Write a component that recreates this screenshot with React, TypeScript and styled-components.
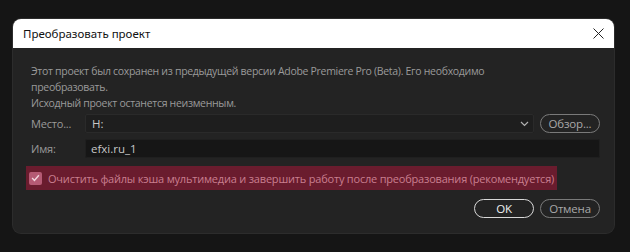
import { FC } from "react";
import styled, { createGlobalStyle } from "styled-components";

const GlobalStyle = createGlobalStyle`
  html, body {
    margin: 0;
    padding: 0;
    background: #151515;
  }
  body {
    width: 630px;
    height: 252px;
    overflow: hidden;
  }
`;

const Page = styled.div`
  width: 630px;
  height: 252px;
  padding: 19px 16px 0 13px;
  box-sizing: border-box;
`;

const Dialog = styled.div`
  width: 601px;
  height: 214px;
  border-radius: 8px;
  overflow: hidden;
  background: #232323;
  box-shadow: 0 0 0 1px #2c2c2c;
  display: flex;
  flex-direction: column;
`;

const TitleBar = styled.div`
  height: 29px;
  background: #ffffff;
  display: flex;
  align-items: center;
  justify-content: space-between;
  padding: 0 9px 0 10px;
`;

const Title = styled.span`
  font-family: "Noto Sans", sans-serif;
  font-size: 11.5px;
  color: #111;
`;

const CloseButton = styled.div`
  width: 14px;
  height: 14px;
  display: flex;
  align-items: center;
  justify-content: center;
`;

const Body = styled.div`
  flex: 1;
  padding: 15px 14px 0 18px;
  font-family: "Open Sans", sans-serif;
  font-size: 10.5px;
  letter-spacing: -0.3px;
  color: #9a9a9a;
  display: flex;
  flex-direction: column;
`;

const Message = styled.p`
  margin: 0;
  line-height: 16px;
`;

const FieldRow = styled.div<{ $top: number }>`
  display: flex;
  align-items: center;
  margin-top: ${(p) => p.$top}px;
  gap: 6px;
`;

const Label = styled.span`
  width: 48px;
  white-space: nowrap;
  font-size: 11px;
  letter-spacing: -0.2px;
`;

const Select = styled.div`
  flex: 1;
  height: 19px;
  box-sizing: border-box;
  background: #1e1e1e;
  border: 1px solid #2a2a2a;
  border-radius: 2px;
  display: flex;
  align-items: center;
  justify-content: space-between;
  padding: 0 4px 0 6px;
  color: #c8c8c8;
  font-size: 11.5px;
  letter-spacing: 0;
`;

const Input = styled.div`
  flex: 1;
  height: 19px;
  box-sizing: border-box;
  background: #161616;
  border: 1px solid #1f1f1f;
  border-radius: 2px;
  display: flex;
  align-items: center;
  padding: 0 5px;
  color: #c8c8c8;
  font-size: 11.5px;
  letter-spacing: 0;
`;

const PillButton = styled.div<{ $primary?: boolean }>`
  width: 60px;
  height: 19px;
  box-sizing: border-box;
  border-radius: 10px;
  border: 1.5px solid ${(p) => (p.$primary ? "#d8d8d8" : "#7a7a7a")};
  color: ${(p) => (p.$primary ? "#f0f0f0" : "#a8a8a8")};
  display: flex;
  align-items: center;
  justify-content: center;
  font-size: 11.5px;
  letter-spacing: -0.2px;
`;

const CheckRow = styled.div`
  margin-top: 8px;
  margin-left: -5px;
  align-self: flex-start;
  width: 531px;
  height: 24px;
  box-sizing: border-box;
  background: #6a1c2e;
  display: flex;
  align-items: center;
  padding-left: 3px;
  gap: 6px;
  color: #c97f90;
  font-size: 11px;
  letter-spacing: -0.2px;
  white-space: nowrap;
`;

const CheckBox = styled.div`
  width: 13px;
  height: 13px;
  border-radius: 2px;
  background: #b55a74;
  display: flex;
  align-items: center;
  justify-content: center;
`;

const Footer = styled.div`
  display: flex;
  justify-content: flex-end;
  gap: 6px;
  margin-top: 9px;
`;

const App: FC = () => {
  return (
    <>
      <GlobalStyle />
      <Page>
        <Dialog>
          <TitleBar>
            <Title>Преобразовать проект</Title>
            <CloseButton>
              <svg width="11" height="11" viewBox="0 0 11 11">
                <path d="M0.5 0.5 L10.5 10.5 M10.5 0.5 L0.5 10.5" stroke="#222" strokeWidth="1" />
              </svg>
            </CloseButton>
          </TitleBar>
          <Body>
            <Message>
              Этот проект был сохранен из предыдущей версии Adobe Premiere Pro (Beta). Его необходимо
              <br />
              преобразовать.
              <br />
              Исходный проект останется неизменным.
            </Message>
            <FieldRow $top={3}>
              <Label>Место...</Label>
              <Select>
                <span>H:</span>
                <svg width="9" height="6" viewBox="0 0 9 6">
                  <path d="M1 1 L4.5 4.5 L8 1" stroke="#b0b0b0" strokeWidth="1.2" fill="none" />
                </svg>
              </Select>
              <PillButton>Обзор...</PillButton>
            </FieldRow>
            <FieldRow $top={6}>
              <Label>Имя:</Label>
              <Input>efxi.ru_1</Input>
            </FieldRow>
            <CheckRow>
              <CheckBox>
                <svg width="9" height="8" viewBox="0 0 10 9">
                  <path d="M1.2 4.6 L3.8 7.2 L8.8 1.4" stroke="#f2d6de" strokeWidth="1.6" fill="none" />
                </svg>
              </CheckBox>
              Очистить файлы кэша мультимедиа и завершить работу после преобразования (рекомендуется)
            </CheckRow>
            <Footer>
              <PillButton $primary>OK</PillButton>
              <PillButton>Отмена</PillButton>
            </Footer>
          </Body>
        </Dialog>
      </Page>
    </>
  );
};

export default App;
